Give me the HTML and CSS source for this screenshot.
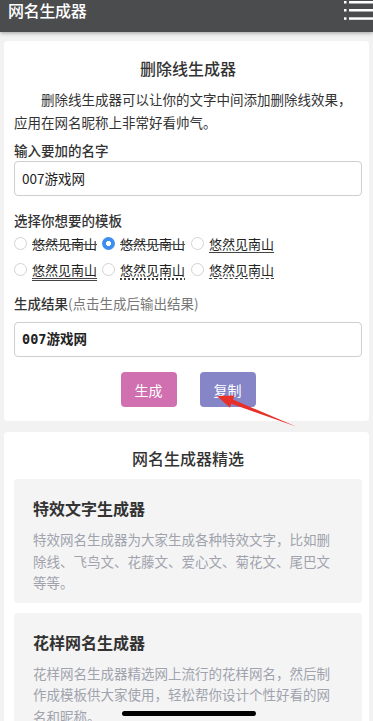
FILE: index.html
```html
<!DOCTYPE html>
<html lang="zh-CN">
<head>
<meta charset="utf-8">
<title>网名生成器</title>
<link rel="stylesheet" href="styles.css">
</head>
<body>
<header class="topbar">
  <div class="brand">网名生成器</div>
  <svg class="menu" width="29" height="21" viewBox="0 0 29 21">
    <rect x="0" y="1" width="2.5" height="2.5" fill="#fff"/>
    <rect x="5" y="1" width="24" height="2.5" fill="#fff"/>
    <rect x="0" y="9" width="2.5" height="2.5" fill="#fff"/>
    <rect x="5" y="9" width="24" height="2.5" fill="#fff"/>
    <rect x="0" y="17.3" width="2.5" height="2.5" fill="#fff"/>
    <rect x="5" y="17.3" width="24" height="2.5" fill="#fff"/>
  </svg>
</header>

<main class="page">
  <section class="card tool">
    <h1 class="card-title">删除线生成器</h1>
    <p class="intro">删除线生成器可以让你的文字中间添加删除线效果，应用在网名昵称上非常好看帅气。</p>

    <div class="label">输入要加的名字</div>
    <div class="field">007游戏网</div>

    <div class="label label-gap">选择你想要的模板</div>
    <div class="options">
      <div class="opt"><span class="radio"></span><span class="opt-text deco-strike">悠然见南山</span></div>
      <div class="opt"><span class="radio checked"></span><span class="opt-text deco-strike">悠然见南山</span></div>
      <div class="opt"><span class="radio"></span><span class="opt-text deco-under">悠然见南山</span></div>
      <div class="opt"><span class="radio"></span><span class="opt-text deco-double">悠然见南山</span></div>
      <div class="opt"><span class="radio"></span><span class="opt-text deco-dotted">悠然见南山</span></div>
      <div class="opt"><span class="radio"></span><span class="opt-text deco-dashed">悠然见南山</span></div>
    </div>

    <div class="label result-label">生成结果<span class="hint">(点击生成后输出结果)</span></div>
    <div class="field result">007游戏网</div>

    <div class="actions">
      <button class="btn btn-gen">生成</button>
      <button class="btn btn-copy">复制</button>
    </div>
  </section>

  <section class="card picks">
    <h2 class="card-title">网名生成器精选</h2>
    <div class="pick">
      <h3 class="pick-title">特效文字生成器</h3>
      <p class="pick-desc">特效网名生成器为大家生成各种特效文字，比如删除线、飞鸟文、花藤文、爱心文、菊花文、尾巴文等等。</p>
    </div>
    <div class="pick">
      <h3 class="pick-title">花样网名生成器</h3>
      <p class="pick-desc">花样网名生成器精选网上流行的花样网名，然后制作成模板供大家使用，轻松帮你设计个性好看的网名和昵称。</p>
    </div>
  </section>
</main>

<svg class="arrow" width="373" height="721" viewBox="0 0 373 721">
  <polygon points="217,396 234.5,395.5 233,399.6 296,426.5 231.2,403.8 230,407.8" fill="#e8302a"/>
</svg>
<div class="home-bar"></div>
</body>
</html>
```

FILE: styles.css
```css
* { box-sizing: border-box; }
html, body { margin: 0; padding: 0; }
body {
  width: 373px;
  height: 721px;
  overflow: hidden;
  background: #f2f2f2;
  font-family: "Noto Sans CJK SC", "Noto Sans", sans-serif;
  color: #333;
  position: relative;
}
.topbar {
  height: 32px;
  background: #4b4c4e;
  display: flex;
  justify-content: space-between;
  align-items: flex-start;
  padding-left: 8px;
  box-shadow: 0 1px 4px rgba(0,0,0,0.35);
  position: relative;
  z-index: 1;
}
.brand {
  color: #fff;
  font-size: 16px;
  line-height: 19px;
  padding-top: 1px;
  letter-spacing: -0.3px;
  font-weight: 500;
}
.menu { display: block; }
.page {
  padding: 9px 4px 0 4px;
  display: flex;
  flex-direction: column;
  gap: 11px;
}
.card {
  background: #fff;
  border-radius: 4px;
  padding: 0 7px 0 10px;
}
.tool { padding-top: 15px; padding-bottom: 14px; }
.card-title {
  margin: 0;
  text-align: center;
  font-size: 16px;
  line-height: 24px;
  font-weight: 500;
  color: #333;
}
.intro {
  margin: 8px 0 0 0;
  font-size: 13.5px;
  line-height: 23px;
  text-indent: 2em;
  color: #333;
}
.label {
  margin-top: 6px;
  font-size: 13.5px;
  line-height: 20px;
  font-weight: 500;
  color: #333;
}
.label-gap { margin-top: 14px; }
.field {
  margin-top: 1px;
  height: 35px;
  border: 1px solid #cfcfcf;
  border-radius: 4px;
  padding-left: 7px;
  font-size: 13.5px;
  line-height: 33px;
  color: #222;
}
.options {
  margin-top: 1px;
  display: grid;
  grid-template-columns: 88px 89px 100px;
  grid-auto-rows: 26px;
}
.opt {
  display: flex;
  align-items: center;
  gap: 5px;
}
.radio {
  width: 13px;
  height: 13px;
  border-radius: 50%;
  border: 1px solid #d3d3d3;
  background: #fff;
  flex: none;
  margin-top: -1px;
}
.radio.checked {
  border: none;
  background: radial-gradient(circle, #fff 0 2.3px, #3d8ef0 2.8px);
}
.opt-text {
  font-size: 13px;
  line-height: 20px;
  color: #222;
  white-space: nowrap;
  text-decoration-color: #444;
  text-decoration-thickness: 1px;
}
.deco-strike { text-decoration-line: line-through; }
.deco-under { text-decoration-line: underline; text-underline-offset: 3px; }
.deco-double { text-decoration-line: underline; text-decoration-style: double; text-underline-offset: 3px; }
.deco-dotted { text-decoration-line: underline; text-decoration-style: dotted; text-decoration-thickness: 1.5px; text-underline-offset: 3px; }
.deco-dashed { text-decoration-line: underline; text-decoration-style: dashed; text-underline-offset: 3px; }
.result-label { margin-top: 10px; }
.hint { font-weight: 400; color: #777; }
.result {
  margin-top: 9px;
  font-family: "DejaVu Sans Mono", "Noto Sans CJK SC", monospace;
  font-weight: 700;
  font-size: 13.5px;
}
.actions {
  margin-top: 15px;
  display: flex;
  justify-content: center;
  gap: 23px;
}
.btn {
  width: 56px;
  height: 35px;
  border: none;
  border-radius: 4px;
  color: #fff;
  font-family: "Noto Sans CJK SC", sans-serif;
  font-size: 14px;
  padding: 0;
}
.btn-gen { background: #d070b0; }
.btn-copy { background: #8585c8; }
.picks {
  padding-top: 14px;
  padding-bottom: 20px;
  display: flex;
  flex-direction: column;
  gap: 10px;
}
.picks .card-title { margin-bottom: -1px; }
.pick {
  background: #f4f4f4;
  border-radius: 4px;
  padding: 17px 19px 9px 19px;
}
.pick-title {
  margin: 0;
  font-size: 16px;
  line-height: 24px;
  font-weight: 700;
  color: #333;
}
.pick-desc {
  margin: 9px 0 0 0;
  font-size: 13.5px;
  line-height: 21.5px;
  color: #a0a3ad;
}
.arrow {
  position: absolute;
  left: 0;
  top: 0;
  pointer-events: none;
  z-index: 2;
}
.home-bar {
  position: absolute;
  left: 122px;
  top: 711px;
  width: 134px;
  height: 5px;
  border-radius: 3px;
  background: #000;
  z-index: 3;
}
```
